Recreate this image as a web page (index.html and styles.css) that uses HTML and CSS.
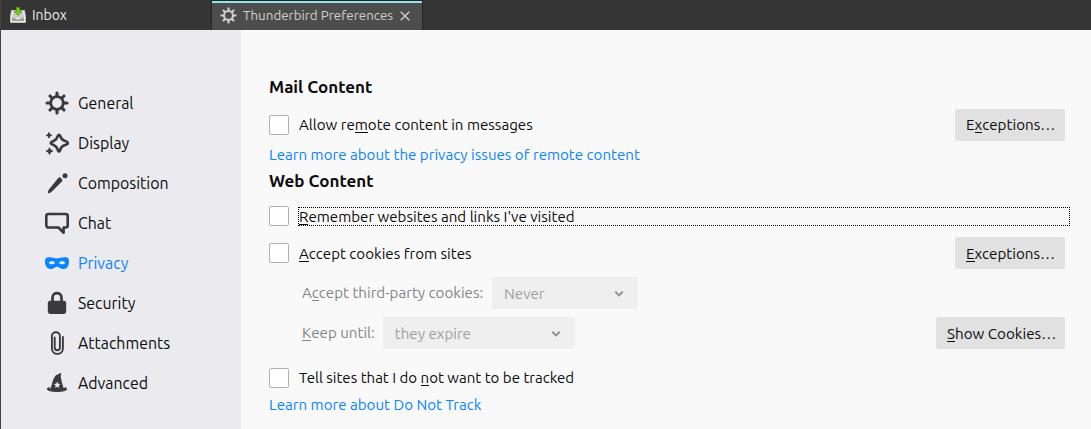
FILE: index.html
```html
<!DOCTYPE html>
<html lang="en">
<head>
<meta charset="utf-8">
<title>Thunderbird Preferences</title>
<link rel="stylesheet" href="styles.css">
</head>
<body>
<svg class="defs" width="0" height="0">
  <symbol id="gear" viewBox="0 0 24 24">
    <circle cx="12" cy="12" r="6.300" fill="none" stroke="currentColor" stroke-width="2.800"/>
    <path d="M12 5V2M12 19v3M5 12H2M19 12h3M7 7 5 5M17 7l2-2M7 17l-2 2M17 17l2 2" fill="none" stroke="currentColor" stroke-width="3.100" stroke-linecap="round"/>
  </symbol>
</svg>
<header class="tabs">
  <div class="tab tab-inbox">
    <svg class="inbox-icon" width="16" height="16" viewBox="0 0 16 16">
      <path d="M1.500 3.500h13l1 6v6H.5v-6z" fill="#eeeeec" stroke="#c9cac3" stroke-width=".8"/>
      <path d="M3 5.500h10v1H3zM2.500 7.500h11v1h-11zM2 9.500h12v1H2z" fill="#a5a8a0"/>
      <path d="M2 11h3l1 1.200h4L11 11h3v3H2z" fill="#9a9c96"/>
      <path d="M6.500.5h3v3.800H12L8 8.300 4 4.300h2.500z" fill="#73d216" stroke="#4e9a06" stroke-width=".9"/>
    </svg>
    <span>Inbox</span>
  </div>
  <div class="tab tab-active">
    <svg class="tab-gear" width="17" height="17"><use href="#gear"/></svg>
    <span>Thunderbird Preferences</span>
    <svg class="close" width="10" height="10" viewBox="0 0 10 10"><path d="M.7.7l8.600 8.600M9.300.7.7 9.300" stroke="#c4c4c4" stroke-width="1.600"/></svg>
  </div>
</header>
<div class="page">
  <nav class="sidebar">
    <a class="item"><svg class="icon" viewBox="0 0 24 24"><use href="#gear"/></svg><span>General</span></a>
    <a class="item"><svg class="icon" viewBox="0 0 24 24">
      <path d="M14 3.800c.8 0 1.100.6 1.400 1.600.7 2.500 1.600 3.600 4.100 4.400 2.600.9 3.500 1.200 3.500 2.200s-.9 1.400-3.500 2.200c-2.500.8-3.400 1.700-4.100 4.200-.3 1-.6 2.200-1.400 2.200s-1.100-1.200-1.400-2.200c-.7-2.500-1.600-3.400-3.600-4.200C6.700 13.300 5.800 13 5.800 12s1.200-1.400 3.200-2.200c2-.8 2.900-1.900 3.600-4.400.3-1 .6-1.600 1.400-1.600z" fill="none" stroke="currentColor" stroke-width="2.700"/>
      <path d="M4 1.500l.8 2 2 .8-2 .8-.8 2-.8-2-2-.8 2-.8zM4.500 16.800l1 2.300 2.300 1-2.300 1-1 2.400-1-2.400-2.300-1 2.300-1z" fill="currentColor" stroke="currentColor" stroke-width="1"/>
    </svg><span>Display</span></a>
    <a class="item"><svg class="icon" viewBox="0 0 24 24">
      <path d="M13.700 7.300c1.100-1.100 3.900 1.600 2.800 2.700L6.500 20c-1 1-3 1.700-3 1.700s-.1-1.300.7-2.500z" fill="currentColor" stroke="currentColor" stroke-width="1.200" stroke-linejoin="round"/>
      <circle cx="20" cy="4.700" r="2.500" fill="currentColor"/>
    </svg><span>Composition</span></a>
    <a class="item"><svg class="icon" viewBox="0 0 24 24">
      <path d="M3.500 3h17c1.200 0 2.200.9 2.200 2v9.500c0 1.100-1 2-2.200 2h-1.900v5.300l-5.100-5.300h-10c-1.200 0-2.200-.9-2.200-2V5c0-1.100 1-2 2.200-2z" fill="none" stroke="currentColor" stroke-width="2.600" stroke-linejoin="round"/>
    </svg><span>Chat</span></a>
    <a class="item selected"><svg class="icon" viewBox="0 0 24 24">
      <path fill-rule="evenodd" d="M3 6.300c3.500-.6 6 .9 9 .9s5.500-1.500 9-.9c2.400.4 3 1.700 3 4.200 0 4.300-2 7.500-5.300 7.500-3.700 0-5-2.300-6.700-2.300S9 18 5.300 18C2 18 0 14.800 0 10.500 0 8 .6 6.700 3 6.300zM3.700 12c1.200 1.700 5.300 1.700 6.400 0-1.600-2.700-5-2.700-6.400 0zm10.200 0c1.200 1.700 5.300 1.700 6.400 0-1.400-2.700-4.800-2.700-6.400 0z" fill="currentColor"/>
    </svg><span>Privacy</span></a>
    <a class="item"><svg class="icon" viewBox="0 0 24 24">
      <rect x="2.800" y="9.800" width="18.400" height="13.200" rx="2.400" fill="currentColor"/>
      <path d="M7.500 11V6.700c0-6 9-6 9 0V11" fill="none" stroke="currentColor" stroke-width="2.700"/>
    </svg><span>Security</span></a>
    <a class="item"><svg class="icon" viewBox="0 0 24 24">
      <path d="M9.700 6.500v10.300c0 3.200 5.200 3.200 5.200 0V5.200c0-5.300-8-5.300-8 0v12.300c0 7.200 11 7.200 11 0V6" fill="none" stroke="currentColor" stroke-width="1.900" stroke-linecap="round"/>
    </svg><span>Attachments</span></a>
    <a class="item"><svg class="icon" viewBox="0 0 24 24">
      <path fill-rule="evenodd" d="M5.500 17.500C7.300 13 8 7.200 10.700 4.500 12 3.200 14.600 3.300 16 1.800c.5 1.800-.5 2.500-.2 4.300.7 4 1.500 7.700 3 11.400-2 2.500-11.300 2.500-13.300 0zm6.700-7-1 2.300-2.400.2 1.900 1.600-.6 2.400 2.100-1.300 2.100 1.300-.6-2.400 1.900-1.600-2.400-.2z" fill="currentColor"/>
      <path d="M4 16.500c-1 .3-1.700.8-1.700 1.500 0 3.300 19.400 3.300 19.400 0 0-.7-.7-1.200-1.700-1.500-.2 3.300-15.800 3.300-16 0z" fill="currentColor" stroke="currentColor"/>
    </svg><span>Advanced</span></a>
  </nav>
  <main class="content">
    <h2 class="heading h-mail">Mail Content</h2>
    <div class="row">
      <i class="check"></i><span>Allow re<u>m</u>ote content in messages</span>
      <button class="button">E<u>x</u>ceptions…</button>
    </div>
    <a class="link">Learn more about the privacy issues of remote content</a>
    <h2 class="heading h-web">Web Content</h2>
    <div class="row r-remember">
      <i class="check"></i><div class="focus"><u>R</u>emember websites and links I've visited</div>
    </div>
    <div class="row r-cookies">
      <i class="check"></i><span class="low"><u>A</u>ccept cookies from sites</span>
      <button class="button low"><u>E</u>xceptions…</button>
    </div>
    <div class="row sub">
      <span>A<u>c</u>cept third-party cookies:</span>
      <div class="select s-never"><span>Never</span><svg width="10" height="8" viewBox="0 0 10 8"><path d="M1.300 1.700 5 5.400l3.700-3.700"/></svg></div>
    </div>
    <div class="row sub">
      <span><u>K</u>eep until:</span>
      <div class="select s-expire"><span>they expire</span><svg width="10" height="8" viewBox="0 0 10 8"><path d="M1.300 1.700 5 5.400l3.700-3.700"/></svg></div>
      <button class="button wide low"><u>S</u>how Cookies…</button>
    </div>
    <div class="row r-track">
      <i class="check"></i><span class="l-track">Tell sites that I do <u>n</u>ot want to be tracked</span>
    </div>
    <a class="link k-track">Learn more about Do Not Track</a>
  </main>
</div>
</body>
</html>
```
FILE: styles.css
```css
* { box-sizing: border-box; }
body {
  margin: 0;
  width: 1091px;
  height: 429px;
  overflow: hidden;
  background: #f9f9fa;
  color: #0c0c0d;
  font: 15.12px/20px Ubuntu, "Noto Sans", sans-serif;
  white-space: nowrap;
}
.defs { display: block; height: 0; }
.tabs { display: flex; height: 30px; background: #353535; border-left: 1px solid #4a413c; }
.tab { display: flex; align-items: center; }
.tab-inbox { width: 210px; padding-left: 9px; gap: 6px; color: #eee; font-size: 14px; }
.tab-active {
  width: 212px;
  padding-left: 8px;
  border: solid #242424;
  border-width: 1px 1px 0;
  background: linear-gradient(#8ee6ea 2px, #4d4d4d 2px);
  color: #d0d0d0;
  font-size: 13.4px;
}
.tab-gear { margin-right: 6px; }
.close { margin-left: auto; margin-right: 12px; }
.page { display: flex; height: 399px; border-left: 1px solid #4a413c; }
.sidebar { flex: none; width: 240px; padding: 53px 0 0 44px; background: #ebebef; font-size: 15.9px; }
.item { display: flex; align-items: center; height: 40px; gap: 9px; }
.icon { width: 24px; height: 24px; color: #3a3a3c; }
.selected, .selected .icon { color: #0a84ff; }
.content { flex: 1; min-width: 0; padding: 42px 26px 0 28px; }
.heading { margin: 0; font-size: 17px; line-height: 20px; font-weight: 700; }
.h-mail { height: 37px; padding-top: 5px; }
.h-web { height: 35px; }
.row { display: flex; align-items: center; height: 32px; }
.low { padding-top: 1px; }
.check { flex: none; width: 20px; height: 20px; margin-right: 10px; border: 1px solid #b1b1b1; border-radius: 2px; background: #fff; }
.button {
  width: 110px;
  height: 32px;
  margin-left: auto;
  padding: 0 0 0 11px;
  border: 0;
  border-radius: 2px;
  background: #e1e1e2;
  color: #0c0c0d;
  font: inherit;
  font-size: 15.2px;
  text-align: left;
}
.button.low { padding-top: 2px; }
.wide { width: 129px; }
.link { display: block; height: 30px; padding-top: 4px; color: #0a84ff; }
u { text-decoration: none; box-shadow: inset 0 -1px; display: inline-block; height: 18px; line-height: 20px; vertical-align: top; }
.r-remember { height: 20px; }
.focus {
  flex: none;
  width: 772px;
  height: 19px;
  margin: 1px 0 0 -1px;
  border: 1px dotted #000;
  line-height: 18px;
}
.focus u { line-height: 18px; height: 17px; }
.r-cookies { margin-top: 11px; }
.sub { margin-top: 8px; padding-left: 33px; color: #858586; }
.select { display: flex; align-items: center; justify-content: space-between; height: 32px; padding: 1px 14px 0 12px; border-radius: 2px; background: #efefef; color: #a0a0a1; }
.select path { fill: none; stroke: #919192; stroke-width: 2; }
.s-never { width: 146px; margin-left: auto; margin-right: 427px; }
.s-expire { width: 192px; margin-left: 8px; }
.r-track { height: 20px; margin-top: 19px; }
.l-track { font-size: 15.05px; }
.k-track { padding-top: 7px; }
```
